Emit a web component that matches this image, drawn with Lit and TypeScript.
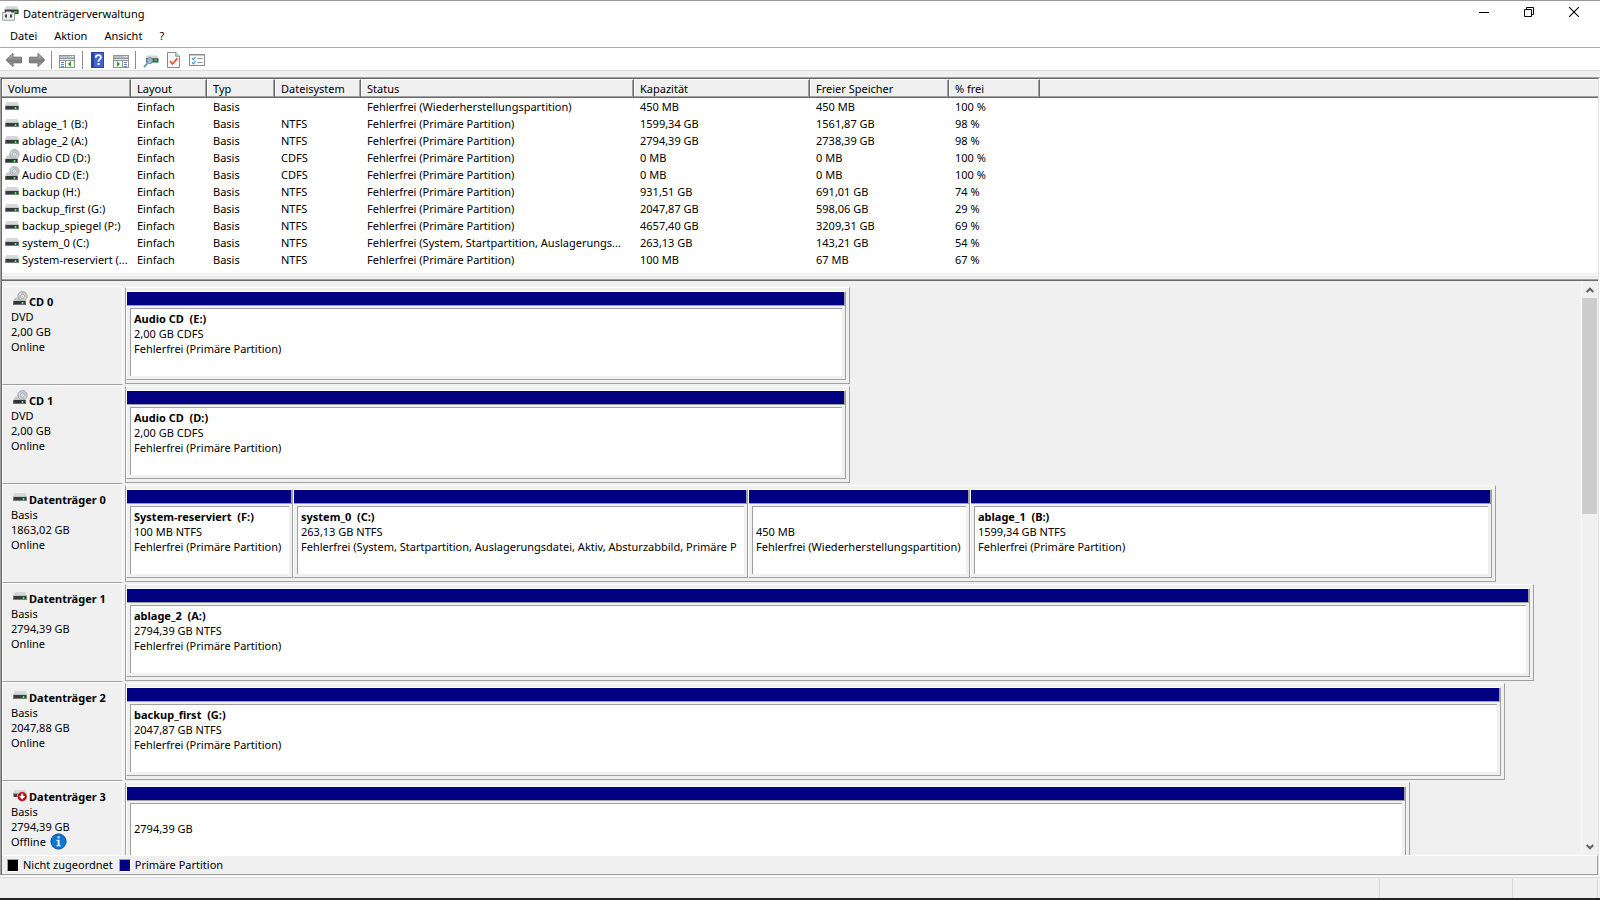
import { LitElement, html, svg, css, nothing } from "lit";
import { customElement, property } from "lit/decorators.js";
import { classMap } from "lit/directives/class-map.js";

type Kind = "drive" | "cd" | "offline";

interface VolumeRow {
  kind: Kind;
  cells: string[];
}

interface Partition {
  share: number;
  title: string;
  size: string;
  status: string;
}

interface Disk {
  kind: Kind;
  name: string;
  type: string;
  size: string;
  state: string;
  extent: number;
  partitions: Partition[];
}

const COLUMNS = ["Volume", "Layout", "Typ", "Dateisystem", "Status", "Kapazität", "Freier Speicher", "% frei"];
const HEALTHY = "Fehlerfrei (Primäre Partition)";

const VOLUMES: VolumeRow[] = [
  { kind: "drive", cells: ["", "Einfach", "Basis", "", "Fehlerfrei (Wiederherstellungspartition)", "450 MB", "450 MB", "100 %"] },
  { kind: "drive", cells: ["ablage_1 (B:)", "Einfach", "Basis", "NTFS", HEALTHY, "1599,34 GB", "1561,87 GB", "98 %"] },
  { kind: "drive", cells: ["ablage_2 (A:)", "Einfach", "Basis", "NTFS", HEALTHY, "2794,39 GB", "2738,39 GB", "98 %"] },
  { kind: "cd", cells: ["Audio CD (D:)", "Einfach", "Basis", "CDFS", HEALTHY, "0 MB", "0 MB", "100 %"] },
  { kind: "cd", cells: ["Audio CD (E:)", "Einfach", "Basis", "CDFS", HEALTHY, "0 MB", "0 MB", "100 %"] },
  { kind: "drive", cells: ["backup (H:)", "Einfach", "Basis", "NTFS", HEALTHY, "931,51 GB", "691,01 GB", "74 %"] },
  { kind: "drive", cells: ["backup_first (G:)", "Einfach", "Basis", "NTFS", HEALTHY, "2047,87 GB", "598,06 GB", "29 %"] },
  { kind: "drive", cells: ["backup_spiegel (P:)", "Einfach", "Basis", "NTFS", HEALTHY, "4657,40 GB", "3209,31 GB", "69 %"] },
  { kind: "drive", cells: ["system_0 (C:)", "Einfach", "Basis", "NTFS", "Fehlerfrei (System, Startpartition, Auslagerungs...", "263,13 GB", "143,21 GB", "54 %"] },
  { kind: "drive", cells: ["System-reserviert (...", "Einfach", "Basis", "NTFS", HEALTHY, "100 MB", "67 MB", "67 %"] },
];

const DISKS: Disk[] = [
  {
    kind: "cd", name: "CD 0", type: "DVD", size: "2,00 GB", state: "Online", extent: 49.8,
    partitions: [{ share: 1, title: "Audio CD  (E:)", size: "2,00 GB CDFS", status: HEALTHY }],
  },
  {
    kind: "cd", name: "CD 1", type: "DVD", size: "2,00 GB", state: "Online", extent: 49.8,
    partitions: [{ share: 1, title: "Audio CD  (D:)", size: "2,00 GB CDFS", status: HEALTHY }],
  },
  {
    kind: "drive", name: "Datenträger 0", type: "Basis", size: "1863,02 GB", state: "Online", extent: 94.16,
    partitions: [
      { share: 165, title: "System-reserviert  (F:)", size: "100 MB NTFS", status: HEALTHY },
      { share: 453, title: "system_0  (C:)", size: "263,13 GB NTFS", status: "Fehlerfrei (System, Startpartition, Auslagerungsdatei, Aktiv, Absturzabbild, Primäre P" },
      { share: 220, title: "", size: "450 MB", status: "Fehlerfrei (Wiederherstellungspartition)" },
      { share: 520, title: "ablage_1  (B:)", size: "1599,34 GB NTFS", status: HEALTHY },
    ],
  },
  {
    kind: "drive", name: "Datenträger 1", type: "Basis", size: "2794,39 GB", state: "Online", extent: 96.77,
    partitions: [{ share: 1, title: "ablage_2  (A:)", size: "2794,39 GB NTFS", status: HEALTHY }],
  },
  {
    kind: "drive", name: "Datenträger 2", type: "Basis", size: "2047,88 GB", state: "Online", extent: 94.78,
    partitions: [{ share: 1, title: "backup_first  (G:)", size: "2047,87 GB NTFS", status: HEALTHY }],
  },
  {
    kind: "offline", name: "Datenträger 3", type: "Basis", size: "2794,39 GB", state: "Offline", extent: 88.26,
    partitions: [{ share: 1, title: "", size: "2794,39 GB", status: "" }],
  },
];

/* Drive body, its top edge at y */
const driveShape = (y: number) => svg`
  <path d="M2.5 ${y}h11l1.5 3.5h-14z" fill="#d6d9dc"/>
  <rect x="1" y="${y + 3}" width="14" height="1" fill="#c2c5c8"/>
  <rect x="1" y="${y + 4}" width="14" height="4" fill="#7b7d7f"/>
  <rect x="2" y="${y + 4}" width="12" height="3" fill="#393c3e"/>
  <rect x="10" y="${y + 5}" width="3" height="2" fill="#1f8a2c"/>
  <rect x="11" y="${y + 5}" width="1" height="2" fill="#5cf05c"/>`;

const KIND_ICONS = {
  drive: html`<svg width="16" height="16" viewBox="0 0 16 16" aria-hidden="true">${driveShape(4)}</svg>`,
  cd: html`<svg width="16" height="16" viewBox="0 0 16 16" aria-hidden="true">
    <path d="M3 6.5h10l1 4H1z" fill="#c6c9cc"/>
    <circle cx="10.5" cy="5.2" r="4.7" fill="#c3c9cc" stroke="#9ca4a8" stroke-width=".8"/>
    <path d="M10.5 5.2L7.4 3M10.5 5.2l3.1 2.2" stroke="#dde1e3" stroke-width="1.8"/>
    <circle cx="10.5" cy="5.2" r="2" fill="#f2f4f5" stroke="#9aa2a6" stroke-width=".8"/>
    <circle cx="10.5" cy="5.2" r=".7" fill="#b4bbbe"/>
    <rect x="1" y="10" width="13" height="4" fill="#6b6d6f"/>
    <rect x="2" y="10" width="11" height="3" fill="#333638"/>
    <rect x="9" y="11" width="3" height="2" fill="#1f8a2c"/>
    <rect x="10" y="11" width="1" height="2" fill="#5cf05c"/>
  </svg>`,
  offline: html`<svg width="16" height="16" viewBox="0 0 16 16" aria-hidden="true">
    <path d="M2.5 4h11l1.5 3.5h-14z" fill="#d6d9dc"/>
    <rect x="1" y="7" width="5" height="4" fill="#9a9c9e"/>
    <rect x="2" y="8" width="3" height="3" fill="#3c3f41"/>
    <circle cx="10.2" cy="10.6" r="4.9" fill="#b3121d" stroke="#f3dcdc" stroke-width=".5"/>
    <path d="M9.2 7.7h2v2.3h2.1l-3.1 3.4-3.1-3.4h2.1z" fill="#fff"/>
  </svg>`,
};

const APP_ICON = html`<svg width="17" height="16" viewBox="0 0 17 16" aria-hidden="true">
  <path d="M4 1.2h11l1.4 3.5H2.6z" fill="#d3d6d8"/>
  <rect x="2.6" y="4.5" width="14" height="4.6" fill="#3a3d3f"/>
  <rect x="12" y="6" width="3" height="2" fill="#2fc43a"/>
  <path d="M.5 7.5h3l1-1h4l1 1h3v7.8H.5z" fill="#e9eaeb" stroke="#8e9193" stroke-width=".8"/>
  <rect x="3" y="9.5" width="2" height="3" fill="#3d4143"/>
  <rect x="8" y="9.5" width="2" height="3" fill="#3d4143"/>
</svg>`;

const BACK = html`<svg width="18" height="16" viewBox="0 0 18 16" aria-hidden="true">
  <defs><linearGradient id="b" x2="0" y2="1"><stop offset="0" stop-color="#c3c3c3"/><stop offset=".55" stop-color="#7d7d7d"/><stop offset="1" stop-color="#b0b0b0"/></linearGradient></defs>
  <path d="M1.2 8L8 1.4v3.8h8.6v5.6H8v3.8z" fill="url(#b)" stroke="#6c6c6c" stroke-linejoin="round"/>
</svg>`;
const FORWARD = html`<svg width="18" height="16" viewBox="0 0 18 16" aria-hidden="true">
  <defs><linearGradient id="f" x2="0" y2="1"><stop offset="0" stop-color="#c3c3c3"/><stop offset=".55" stop-color="#7d7d7d"/><stop offset="1" stop-color="#b0b0b0"/></linearGradient></defs>
  <path d="M16.8 8L10 1.4v3.8H1.4v5.6H10v3.8z" fill="url(#f)" stroke="#6c6c6c" stroke-linejoin="round"/>
</svg>`;
const TREE = html`<svg width="16" height="16" viewBox="0 0 16 16" shape-rendering="crispEdges" aria-hidden="true">
  <rect x="0" y="3" width="16" height="13" fill="#8b959b"/>
  <rect x="1" y="4" width="14" height="2" fill="#b7bfc4"/>
  <rect x="11" y="4" width="1" height="1" fill="#fff"/><rect x="13" y="4" width="1" height="1" fill="#fff"/>
  <rect x="1" y="7" width="14" height="1" fill="#e9edf0"/>
  <rect x="1" y="9" width="5" height="6" fill="#fff"/><rect x="7" y="9" width="8" height="6" fill="#f4f8f2"/>
  <path d="M2 10h3v1H2zM2 12h3v1H2zM2 14h3v1H2z" fill="#5b87c5"/>
  <path d="M12 9v6L9 12z" fill="#2fa31f" shape-rendering="auto"/>
</svg>`;
const PANE = html`<svg width="16" height="16" viewBox="0 0 16 16" shape-rendering="crispEdges" aria-hidden="true">
  <rect x="0" y="3" width="16" height="13" fill="#8b959b"/>
  <rect x="1" y="4" width="14" height="2" fill="#b7bfc4"/>
  <rect x="11" y="4" width="1" height="1" fill="#fff"/><rect x="13" y="4" width="1" height="1" fill="#fff"/>
  <rect x="1" y="7" width="14" height="1" fill="#e9edf0"/>
  <rect x="1" y="9" width="8" height="6" fill="#f4f8f2"/><rect x="10" y="9" width="5" height="6" fill="#fff"/>
  <path d="M11 10h3v1h-3zM11 12h3v1h-3zM11 14h3v1h-3z" fill="#5b87c5"/>
  <path d="M4 9v6l3-3z" fill="#2fa31f" shape-rendering="auto"/>
</svg>`;
const HELP = html`<svg width="13" height="16" viewBox="0 0 13 16" aria-hidden="true">
  <rect x=".5" y=".5" width="12" height="15" fill="#4567d4" stroke="#2b479c"/>
  <rect x="1" y="1" width="2" height="14" fill="#2443a0"/>
  <path d="M4.8 5.8C4.8 4 5.8 3.2 7.3 3.2s2.6.9 2.6 2.3c0 1.9-2.5 2.1-2.5 4.2" fill="none" stroke="#fff" stroke-width="1.7"/>
  <rect x="6.5" y="11" width="2" height="2" fill="#fff"/>
</svg>`;
const RESCAN = html`<svg width="16" height="16" viewBox="0 0 16 16" aria-hidden="true">
  <path d="M3.5 3.5h11l1.3 3H2.2z" fill="#d3d6d8"/>
  <rect x="3" y="6.2" width="12.5" height="4.3" fill="#4a4d4f"/>
  <rect x="11" y="7.2" width="3" height="2" fill="#2fc43a"/>
  <path d="M4.6 11.2L1 15.2" stroke="#7390a8" stroke-width="1.8"/>
  <circle cx="6.7" cy="8.6" r="3" fill="#9fc3de" fill-opacity=".9" stroke="#6f8798"/>
</svg>`;
const CHECK_PAGE = html`<svg width="13" height="16" viewBox="0 0 13 16" aria-hidden="true">
  <path d="M.5.5h8.3l3.7 3.7v11.3H.5z" fill="#f8f9fa" stroke="#858b90"/>
  <path d="M8.8.5v3.7h3.7" fill="#dfe2e4" stroke="#858b90"/>
  <path d="M3 9l2.4 3L10.4 6.4" fill="none" stroke="#e8541e" stroke-width="1.7"/>
</svg>`;
const CHECK_LIST = html`<svg width="16" height="16" viewBox="0 0 16 16" aria-hidden="true">
  <rect x=".5" y="2.5" width="15" height="11" fill="#fafbfc" stroke="#858b90"/>
  <rect x="1" y="3" width="14" height="1" fill="#c5cacd"/>
  <path d="M3 6.2l1.3 1.4L6.6 5M3 10.4l1.3 1.4 2.3-2.7" fill="none" stroke="#3d8fd6" stroke-width="1.1"/>
  <path d="M8.5 6.5h5M8.5 10.5h5" stroke="#8a9095"/>
</svg>`;
const INFO = html`<svg width="17" height="17" viewBox="0 0 17 17" aria-hidden="true">
  <circle cx="8.5" cy="8.5" r="7.6" fill="#0c76d1" stroke="#0a4f96"/>
  <rect x="7.6" y="3.4" width="2" height="2" fill="#fff"/>
  <path d="M6.5 6.8h3v5.4h1.2v1H6.4v-1h1.3V7.8H6.5z" fill="#fff"/>
</svg>`;

@customElement("disk-row")
export class DiskRow extends LitElement {
  @property({ attribute: false }) disk!: Disk;

  static styles = css`
    :host { display: flex; height: 99px; }
    .label {
      box-sizing: border-box;
      flex: 0 0 121px;
      margin-right: 2px;
      padding: 4px 0 0 8px;
      border: 1px solid #fff;
      border-bottom-color: #a0a0a0;
      line-height: 15px;
      white-space: nowrap;
    }
    .name { display: flex; align-items: flex-end; height: 18px; padding-left: 1px; gap: 1px; font-weight: bold; }
    .name svg { flex: none; align-self: flex-start; }
    .state { display: flex; align-items: center; height: 15px; gap: 4px; }
    .track { flex: 1; min-width: 0; padding: 1px 0; }
    .frame {
      box-sizing: border-box;
      height: 100%;
      display: flex;
      padding: 3px 3px 3px 0;
      border: 1px solid #a0a0a0;
      border-top-color: #fff;
    }
    .partition {
      box-sizing: border-box;
      flex-basis: 0;
      min-width: 0;
      display: flex;
      flex-direction: column;
      border: 1px solid #a0a0a0;
      border-top-color: #fff;
      border-left-color: #fff;
    }
    .band { height: 13px; background: #000080; border-right: 1px solid #a0a0a0; border-bottom: 1px solid #a0a0a0; }
    .body {
      flex: 1;
      margin: 2px 3px 3px;
      padding: 2px 3px;
      overflow: hidden;
      background: #fff;
      border-left: 1px solid #a0a0a0;
      border-top: 1px solid #a0a0a0;
      line-height: 15px;
    }
    .text { min-height: 15px; overflow: hidden; white-space: pre; }
    .title { font-weight: bold; }
  `;

  render() {
    const d = this.disk;
    return html`
      <div class="label">
        <div class="name">${KIND_ICONS[d.kind]}<span>${d.name}</span></div>
        <div>${d.type}</div>
        <div>${d.size}</div>
        <div class="state">${d.state}${d.kind === "offline" ? INFO : nothing}</div>
      </div>
      <div class="track">
        <div class="frame" style="width:${d.extent}%">
          ${d.partitions.map(
            (p) => html`<div class="partition" style="flex-grow:${p.share}">
              <div class="band"></div>
              <div class="body">
                <div class="text title">${p.title}</div>
                <div class="text">${p.size}</div>
                <div class="text">${p.status}</div>
              </div>
            </div>`
          )}
        </div>
      </div>
    `;
  }
}

@customElement("app-root")
export class AppRoot extends LitElement {
  static styles = css`
    :host {
      display: flex;
      flex-direction: column;
      box-sizing: border-box;
      height: 100vh;
      overflow: hidden;
      border-top: 1px solid #999;
      border-bottom: 2px solid #25262a;
      background: #f0f0f0;
      color: #000;
      font: 11px/15px "Noto Sans", "Open Sans", sans-serif;
    }
    button { margin: 0; padding: 0; border: 0; background: none; color: inherit; font: inherit; }
    svg { display: block; }

    .titlebar { display: flex; align-items: center; height: 24px; padding: 0 4px 0 2px; gap: 4px; background: #fff; }
    .caption { flex: 1; margin: 0; font-size: 11px; font-weight: normal; }
    .window-buttons { display: flex; align-self: flex-start; }
    .window-buttons button { display: grid; place-items: center; width: 45px; height: 22px; }

    .menubar { display: flex; height: 20px; padding: 0 0 2px 2px; gap: 1px; background: #fff; }
    .menubar button { padding: 0 8px; }

    .toolbar {
      box-sizing: border-box;
      display: flex;
      align-items: center;
      height: 24px;
      padding: 2px 0 0 2px;
      background: #fff;
      border-top: 1px solid #aaa;
      border-bottom: 1px solid #dadada;
    }
    .toolbar button { display: grid; place-items: center; width: 23px; height: 20px; }
    .toolbar .wide { width: 24px; }
    .toolbar .divider { width: 1px; height: 18px; margin: 0 3px; background: #8c8c8c; }

    .console {
      flex: 1;
      min-height: 0;
      display: flex;
      flex-direction: column;
      margin-top: 6px;
      border-top: 1px solid #a0a0a0;
      border-left: 1px solid #a0a0a0;
      border-right: 1px solid #fff;
    }
    .inner {
      flex: 1;
      min-height: 0;
      display: flex;
      flex-direction: column;
      border-top: 1px solid #696969;
      border-left: 1px solid #696969;
      border-right: 1px solid #e3e3e3;
    }

    .list { padding-bottom: 5px; background: #fff; }
    table { width: 100%; table-layout: fixed; border-collapse: separate; border-spacing: 0; }
    th {
      box-sizing: border-box;
      height: 19px;
      padding: 0 0 0 6px;
      text-align: left;
      font-weight: normal;
      background: #f0f0f0;
      border-top: 1px solid #fff;
      border-bottom: 1px solid #696969;
      border-right: 1px solid #696969;
      box-shadow: inset -1px -1px #a0a0a0, inset 1px 0 #fff;
    }
    th:last-child { border-right: 0; box-shadow: inset 0 -1px #a0a0a0; }
    td { height: 17px; padding: 0 0 0 6px; overflow: hidden; white-space: nowrap; line-height: 17px; }
    td:first-child { padding-left: 2px; }
    .volume { display: flex; height: 17px; gap: 2px; }
    .volume svg { flex: none; }
    .c-volume { width: 129px; }
    .c-layout { width: 76px; }
    .c-type { width: 68px; }
    .c-fs { width: 86px; }
    .c-status { width: 273px; }
    .c-capacity { width: 176px; }
    .c-free { width: 139px; }
    .c-percent { width: 91px; }

    .splitter {
      height: 4px;
      margin-top: 2px;
      box-sizing: border-box;
      border-top: 1px solid #fff;
      box-shadow: inset 0 1px #e3e3e3;
    }
    .edge { height: 1px; background: #a0a0a0; border-bottom: 1px solid #696969; }

    .graph { flex: 1; min-height: 0; display: flex; }
    .disks { flex: 1; min-width: 0; padding-top: 5px; overflow: hidden; }
    .scrollbar { display: flex; flex-direction: column; width: 16px; border-left: 1px solid #fff; }
    .scrollbar button { display: grid; place-items: center; height: 17px; }
    .rail { flex: 1; }
    .thumb { width: 15px; background: #cdcdcd; }

    .legend {
      box-sizing: border-box;
      display: flex;
      height: 20px;
      padding: 1px 0 0 5px;
      gap: 6px;
      border-top: 1px solid #fff;
      border-right: 1px solid #a0a0a0;
      border-bottom: 1px solid #a0a0a0;
    }
    .legend-item { display: flex; gap: 4px; }
    .swatch { width: 10px; height: 11px; margin-top: 2px; background: #000; border: 1px solid #a0a0a0; border-right-color: #fff; border-bottom-color: #fff; }
    .swatch.primary { background: #000080; }

    .statusbar {
      display: flex;
      height: 20px;
      margin-top: 1px;
      padding-top: 1px;
      border-top: 1px solid #fff;
      box-shadow: inset 0 1px #d7d7d7;
    }
    .panel { margin-top: 1px; border-right: 1px solid #d7d7d7; }
    .panel.main { flex: 1; }
    .panel.mid { width: 132px; }
    .panel.end { width: 84px; margin-right: 2px; }
  `;

  render() {
    return html`
      <header class="titlebar">
        ${APP_ICON}
        <h1 class="caption">Datenträgerverwaltung</h1>
        <div class="window-buttons">
          <button aria-label="Minimieren">
            <svg width="10" height="10"><path d="M0 5.5h10" stroke="#000"/></svg>
          </button>
          <button aria-label="Verkleinern">
            <svg width="10" height="10" fill="none" stroke="#000"><path d="M.5 2.5h7v7h-7zM2.5 2V.5h7v7H8"/></svg>
          </button>
          <button aria-label="Schließen">
            <svg width="10" height="10"><path d="M0 0l10 10M10 0L0 10" stroke="#000" stroke-width="1.1"/></svg>
          </button>
        </div>
      </header>
      <nav class="menubar">
        <button>Datei</button><button>Aktion</button><button>Ansicht</button><button>?</button>
      </nav>
      <div class="toolbar">
        <button aria-label="Zurück">${BACK}</button>
        <button aria-label="Vorwärts">${FORWARD}</button>
        <span class="divider"></span>
        <button aria-label="Konsolenstruktur" class="wide">${TREE}</button>
        <span class="divider"></span>
        <button aria-label="Hilfe">${HELP}</button>
        <button aria-label="Aktionsbereich">${PANE}</button>
        <span class="divider"></span>
        <button aria-label="Datenträger neu einlesen">${RESCAN}</button>
        <button aria-label="Eigenschaften">${CHECK_PAGE}</button>
        <button aria-label="Einstellungen">${CHECK_LIST}</button>
      </div>
      <main class="console">
        <div class="inner">
          <div class="list">
            <table>
              <colgroup>
                <col class="c-volume" /><col class="c-layout" /><col class="c-type" /><col class="c-fs" />
                <col class="c-status" /><col class="c-capacity" /><col class="c-free" /><col class="c-percent" /><col />
              </colgroup>
              <thead>
                <tr>${COLUMNS.map((c) => html`<th scope="col">${c}</th>`)}<th></th></tr>
              </thead>
              <tbody>
                ${VOLUMES.map(
                  (v) => html`<tr>
                    ${v.cells.map((cell, i) =>
                      i === 0
                        ? html`<td><div class="volume">${KIND_ICONS[v.kind]}<span>${cell}</span></div></td>`
                        : html`<td>${cell}</td>`
                    )}<td></td>
                  </tr>`
                )}
              </tbody>
            </table>
          </div>
          <div class="splitter"></div>
          <div class="edge"></div>
          <div class="graph">
            <div class="disks">${DISKS.map((d) => html`<disk-row .disk=${d}></disk-row>`)}</div>
            <div class="scrollbar">
              <button aria-label="Nach oben">
                <svg width="8" height="6"><path d="M.7 5L4 1.7 7.3 5" fill="none" stroke="#606060" stroke-width="2"/></svg>
              </button>
              <div class="rail"><div class="thumb" style="height:40%"></div></div>
              <button aria-label="Nach unten">
                <svg width="8" height="6"><path d="M.7 1L4 4.3 7.3 1" fill="none" stroke="#606060" stroke-width="2"/></svg>
              </button>
            </div>
          </div>
          <div class="legend">
            ${[
              { label: "Nicht zugeordnet", primary: false },
              { label: "Primäre Partition", primary: true },
            ].map(
              (l) => html`<span class="legend-item">
                <span class=${classMap({ swatch: true, primary: l.primary })}></span>${l.label}
              </span>`
            )}
          </div>
        </div>
      </main>
      <footer class="statusbar">
        <div class="panel main"></div>
        <div class="panel mid"></div>
        <div class="panel end"></div>
      </footer>
    `;
  }
}
